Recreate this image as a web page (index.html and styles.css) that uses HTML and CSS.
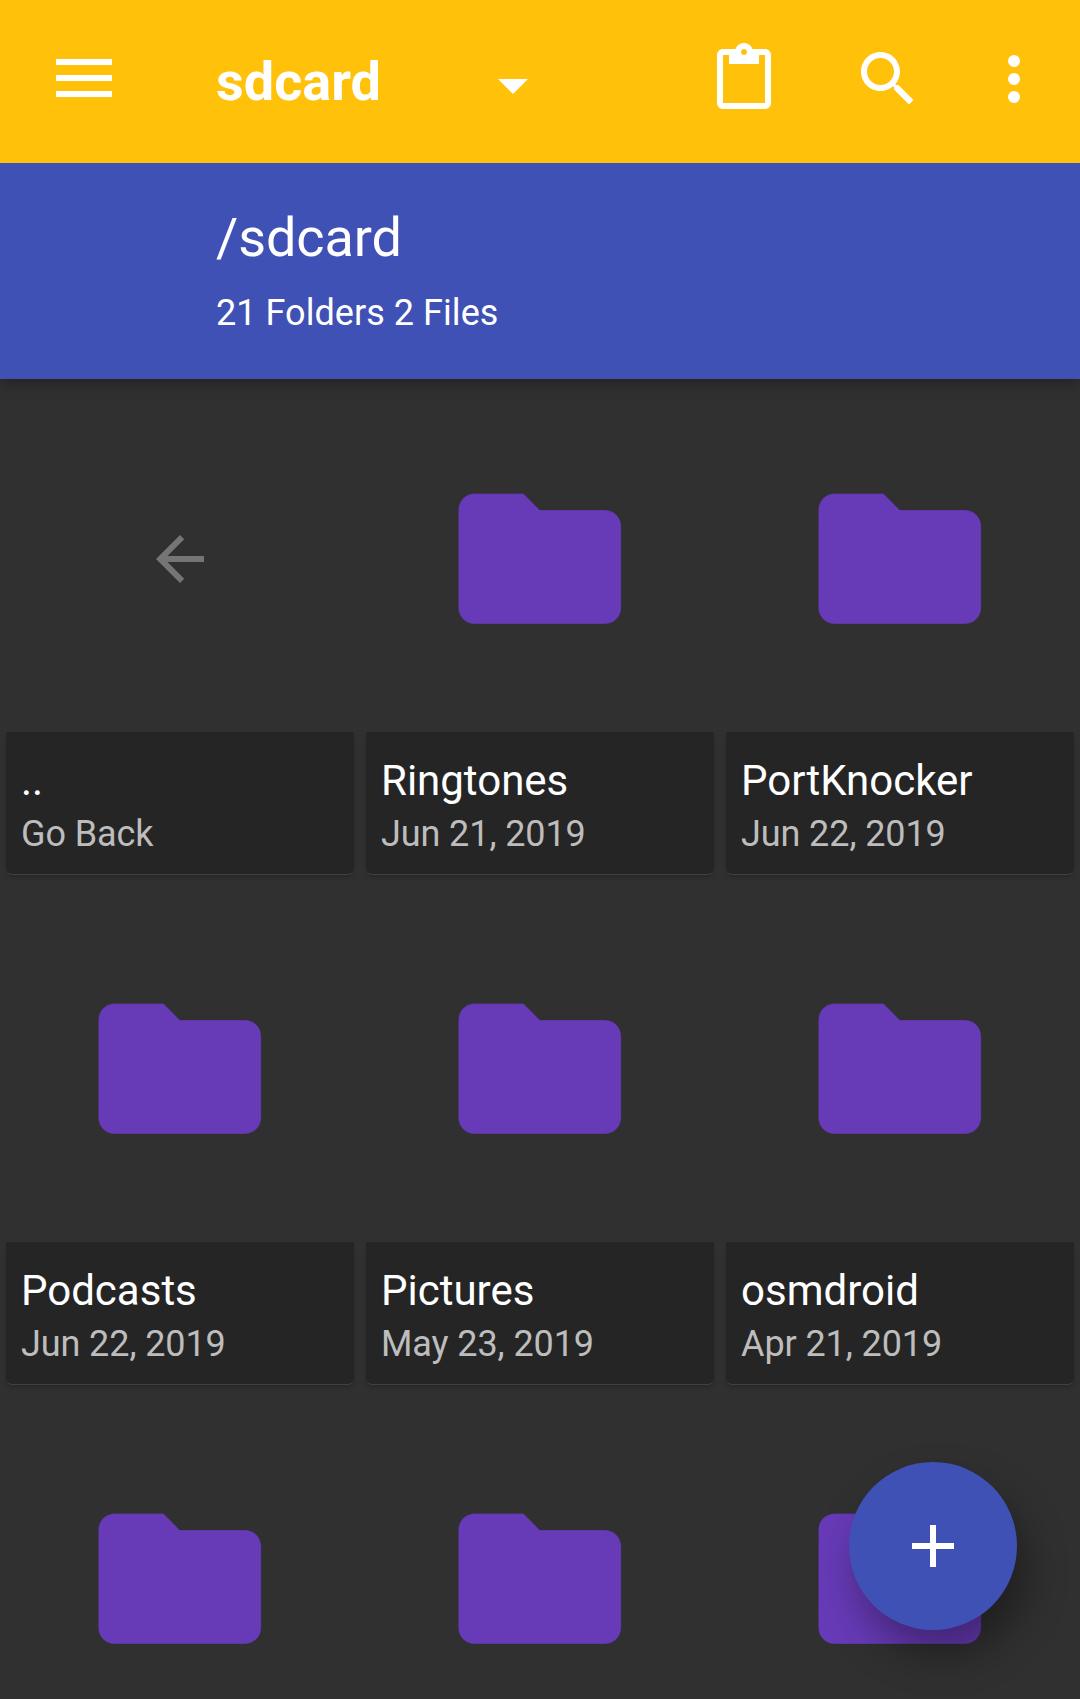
FILE: index.html
```html
<!DOCTYPE html>
<html lang="en">
<head>
<meta charset="utf-8">
<title>sdcard</title>
<link rel="stylesheet" href="styles.css">
</head>
<body>
<svg class="defs" aria-hidden="true">
  <symbol id="folder" viewBox="0 0 24 24"><path d="M10 4H4c-1.100 0-1.990.9-1.990 2L2 18c0 1.100.9 2 2 2h16c1.100 0 2-.9 2-2V8c0-1.100-.9-2-2-2h-8l-2-2z"/></symbol>
</svg>
<div class="screen">
  <header class="header">
    <div class="toolbar">
      <svg class="menu" viewBox="0 0 56 38"><path d="M0 0h56v6H0zM0 16h56v6H0zM0 32h56v6H0z"/></svg>
      <div class="spinner">
        <h1 class="title">sdcard</h1>
        <svg class="caret" viewBox="0 0 30 15"><path d="M0 0h30L15 15z"/></svg>
      </div>
      <div class="actions">
        <svg class="icon" viewBox="0 0 24 24"><path d="M19 2h-4.180C14.400.84 13.300 0 12 0S9.600.84 9.180 2H5c-1.100 0-2 .9-2 2v16c0 1.100.9 2 2 2h14c1.100 0 2-.9 2-2V4c0-1.100-.9-2-2-2zm-7 0c.55 0 1 .45 1 1s-.45 1-1 1-1-.45-1-1 .45-1 1-1zm7 18H5V4h2v3h10V4h2v16z"/></svg>
        <svg class="icon" viewBox="0 0 24 24"><path d="M15.500 14h-.79l-.28-.27C15.410 12.590 16 11.110 16 9.500 16 5.910 13.090 3 9.500 3S3 5.910 3 9.500 5.910 16 9.500 16c1.610 0 3.090-.59 4.230-1.570l.27.28v.79l5 4.990L20.490 19l-4.990-5zm-6 0C7.010 14 5 11.990 5 9.500S7.010 5 9.500 5 14 7.010 14 9.500 11.990 14 9.500 14z"/></svg>
        <svg class="icon more" viewBox="0 0 24 24"><circle cx="12" cy="6" r="2"/><circle cx="12" cy="12" r="2"/><circle cx="12" cy="18" r="2"/></svg>
      </div>
    </div>
    <div class="path">
      <div class="path-name">/sdcard</div>
      <div class="path-count">21 Folders 2 Files</div>
    </div>
  </header>
  <main class="grid">
    <div class="item">
      <div class="thumb"><svg class="back" viewBox="0 0 24 24"><path d="M20 11H7.830l5.590-5.590L12 4l-8 8 8 8 1.410-1.410L7.830 13H20v-2z"/></svg></div>
      <div class="card"><div class="name">..</div><div class="date">Go Back</div></div>
    </div>
    <div class="item">
      <div class="thumb"><svg class="folder"><use href="#folder"/></svg></div>
      <div class="card"><div class="name">Ringtones</div><div class="date">Jun 21, 2019</div></div>
    </div>
    <div class="item">
      <div class="thumb"><svg class="folder"><use href="#folder"/></svg></div>
      <div class="card"><div class="name">PortKnocker</div><div class="date">Jun 22, 2019</div></div>
    </div>
    <div class="item">
      <div class="thumb"><svg class="folder"><use href="#folder"/></svg></div>
      <div class="card"><div class="name">Podcasts</div><div class="date">Jun 22, 2019</div></div>
    </div>
    <div class="item">
      <div class="thumb"><svg class="folder"><use href="#folder"/></svg></div>
      <div class="card"><div class="name">Pictures</div><div class="date">May 23, 2019</div></div>
    </div>
    <div class="item">
      <div class="thumb"><svg class="folder"><use href="#folder"/></svg></div>
      <div class="card"><div class="name">osmdroid</div><div class="date">Apr 21, 2019</div></div>
    </div>
    <div class="item"><div class="thumb"><svg class="folder"><use href="#folder"/></svg></div></div>
    <div class="item"><div class="thumb"><svg class="folder"><use href="#folder"/></svg></div></div>
    <div class="item"><div class="thumb"><svg class="folder"><use href="#folder"/></svg></div></div>
  </main>
  <button class="fab" aria-label="Add"><svg class="plus" viewBox="0 0 14 14"><path d="M14 8H8v6H6V8H0V6h6V0h2v6h6z"/></svg></button>
</div>
</body>
</html>
```
FILE: styles.css
```css
* { box-sizing: border-box; }
body {
  margin: 0;
  background: #303030;
  font-family: Roboto, sans-serif;
  color: #fff;
}
svg { display: block; flex: none; fill: currentColor; }
.defs { width: 0; height: 0; position: absolute; }
.screen {
  position: relative;
  width: 1080px;
  height: 1699px;
  overflow: hidden;
}
.header {
  position: relative;
  height: 379px;
  box-shadow: 0 4px 14px rgba(0, 0, 0, .3);
}
.toolbar {
  display: flex;
  align-items: flex-start;
  height: 163px;
  padding: 43px 30px 0 56px;
  background: #ffc10a;
}
.menu { width: 56px; height: 38px; margin-top: 16px; }
.spinner {
  display: flex;
  justify-content: space-between;
  width: 312px;
  margin-left: 104px;
}
.title {
  margin: 7px 0 0;
  font-size: 54px;
  line-height: 64px;
  font-weight: 700;
}
.caret { width: 30px; height: 15px; margin-top: 36px; }
.actions { display: flex; gap: 72px; margin-left: auto; }
.icon { width: 72px; height: 72px; }
.more { margin-left: -18px; }
.path {
  height: 216px;
  padding: 43px 0 0 216px;
  background: #3f51b5;
}
.path-name { font-size: 54px; line-height: 64px; letter-spacing: -.1px; }
.path-count { margin-top: 22px; font-size: 36px; line-height: 42px; letter-spacing: .05px; }
.grid {
  display: grid;
  grid-template-columns: repeat(3, 360px);
  grid-auto-rows: 510px;
}
.item { padding: 6px 6px 0; }
.thumb {
  display: flex;
  align-items: center;
  justify-content: center;
  height: 347px;
}
.folder {
  width: 195.5px;
  height: 195.5px;
  color: #673ab7;
  stroke: rgba(48, 48, 48, .3);
  stroke-width: .12;
}
.back { width: 72px; height: 72px; color: #757575; }
.card {
  height: 143px;
  padding: 24px 15px 0;
  border-bottom: 1px solid #404040;
  border-radius: 0 0 6px 6px;
  background: #252525;
  box-shadow: 0 3px 4px -1px rgba(0, 0, 0, .2);
}
.name { font-size: 42px; line-height: 50px; }
.date {
  margin-top: 7px;
  font-size: 36px;
  line-height: 42px;
  letter-spacing: -.1px;
  color: #bdbdbd;
}
.fab {
  position: absolute;
  right: 63px;
  bottom: 69px;
  display: grid;
  place-items: center;
  width: 168px;
  height: 168px;
  padding: 0;
  border: 0;
  border-radius: 50%;
  background: #3f51b5;
  color: #fff;
  box-shadow: 9px 24px 40px rgba(0, 0, 0, .36);
}
.plus { width: 42px; height: 42px; }
```
